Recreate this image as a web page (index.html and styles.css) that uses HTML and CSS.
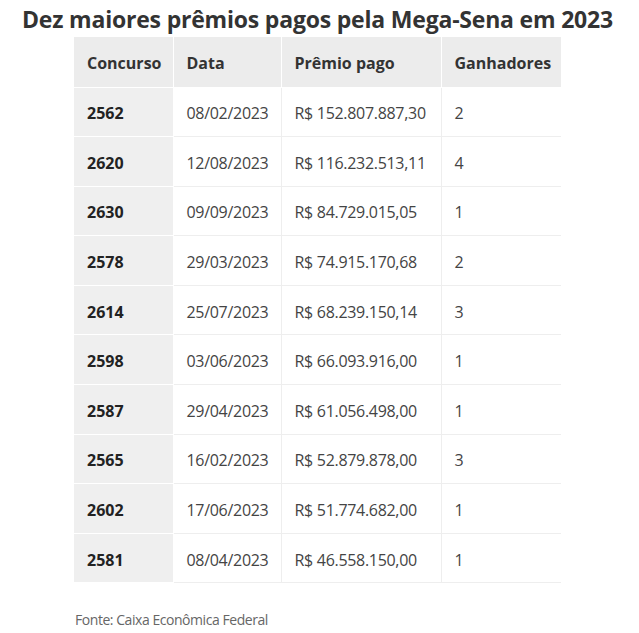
FILE: index.html
```html
<!DOCTYPE html>
<html lang="pt-BR">
<head>
<meta charset="utf-8">
<title>Mega-Sena 2023</title>
<link rel="stylesheet" href="styles.css">
</head>
<body>
<main class="page">
  <h1 class="title">Dez maiores prêmios pagos pela Mega-Sena em 2023</h1>
  <div class="content">
    <table class="prizes">
      <thead>
        <tr><th class="c1">Concurso</th><th class="c2">Data</th><th class="c3">Prêmio pago</th><th class="c4">Ganhadores</th></tr>
      </thead>
      <tbody>
        <tr><th>2562</th><td>08/02/2023</td><td>R$ 152.807.887,30</td><td>2</td></tr>
        <tr><th>2620</th><td>12/08/2023</td><td>R$ 116.232.513,11</td><td>4</td></tr>
        <tr><th>2630</th><td>09/09/2023</td><td>R$ 84.729.015,05</td><td>1</td></tr>
        <tr><th>2578</th><td>29/03/2023</td><td>R$ 74.915.170,68</td><td>2</td></tr>
        <tr><th>2614</th><td>25/07/2023</td><td>R$ 68.239.150,14</td><td>3</td></tr>
        <tr><th>2598</th><td>03/06/2023</td><td>R$ 66.093.916,00</td><td>1</td></tr>
        <tr><th>2587</th><td>29/04/2023</td><td>R$ 61.056.498,00</td><td>1</td></tr>
        <tr><th>2565</th><td>16/02/2023</td><td>R$ 52.879.878,00</td><td>3</td></tr>
        <tr><th>2602</th><td>17/06/2023</td><td>R$ 51.774.682,00</td><td>1</td></tr>
        <tr><th>2581</th><td>08/04/2023</td><td>R$ 46.558.150,00</td><td>1</td></tr>
      </tbody>
    </table>
    <p class="source">Fonte: Caixa Econômica Federal</p>
  </div>
</main>
</body>
</html>
```

FILE: styles.css
```css
html, body {
  margin: 0;
  padding: 0;
  background: #ffffff;
}

body {
  font-family: "Open Sans", "Liberation Sans", sans-serif;
  color: #444444;
}

.page {
  width: 639px;
  padding-top: 3px;
}

.title {
  margin: 0;
  padding-right: 4px;
  font-size: 23px;
  line-height: 32px;
  font-weight: 700;
  color: #333333;
  text-align: center;
  letter-spacing: -0.2px;
}

.content {
  margin-left: 74px;
  width: 487px;
  padding-top: 2px;
}

.prizes {
  width: 487px;
  border-collapse: collapse;
  table-layout: fixed;
  font-size: 16px;
  line-height: 22px;
}

.prizes th,
.prizes td {
  border: 1px solid #eeeeee;
  padding: 3px 0 0 13px;
  height: 49.6px;
  box-sizing: border-box;
  text-align: left;
  vertical-align: middle;
  white-space: nowrap;
}

.prizes thead th {
  background: #ececec;
  border-color: #ffffff;
  font-weight: 700;
  color: #333333;
  height: 50px;
}

.prizes tbody th {
  background: #efefef;
  border-color: #ffffff;
  font-weight: 700;
  color: #222222;
}

.prizes tr > :first-child {
  border-left: none;
}

.prizes tr > :last-child {
  border-right: none;
}

.prizes thead tr > * {
  border-top: none;
}

.prizes td {
  color: #444444;
  letter-spacing: -0.3px;
}

.c1 { width: 99px; }
.c2 { width: 108px; }
.c3 { width: 160px; }
.c4 { width: 120px; }

.source {
  margin: 27px 0 0 1px;
  font-size: 14px;
  line-height: 20px;
  color: #666666;
  letter-spacing: -0.45px;
}
```
